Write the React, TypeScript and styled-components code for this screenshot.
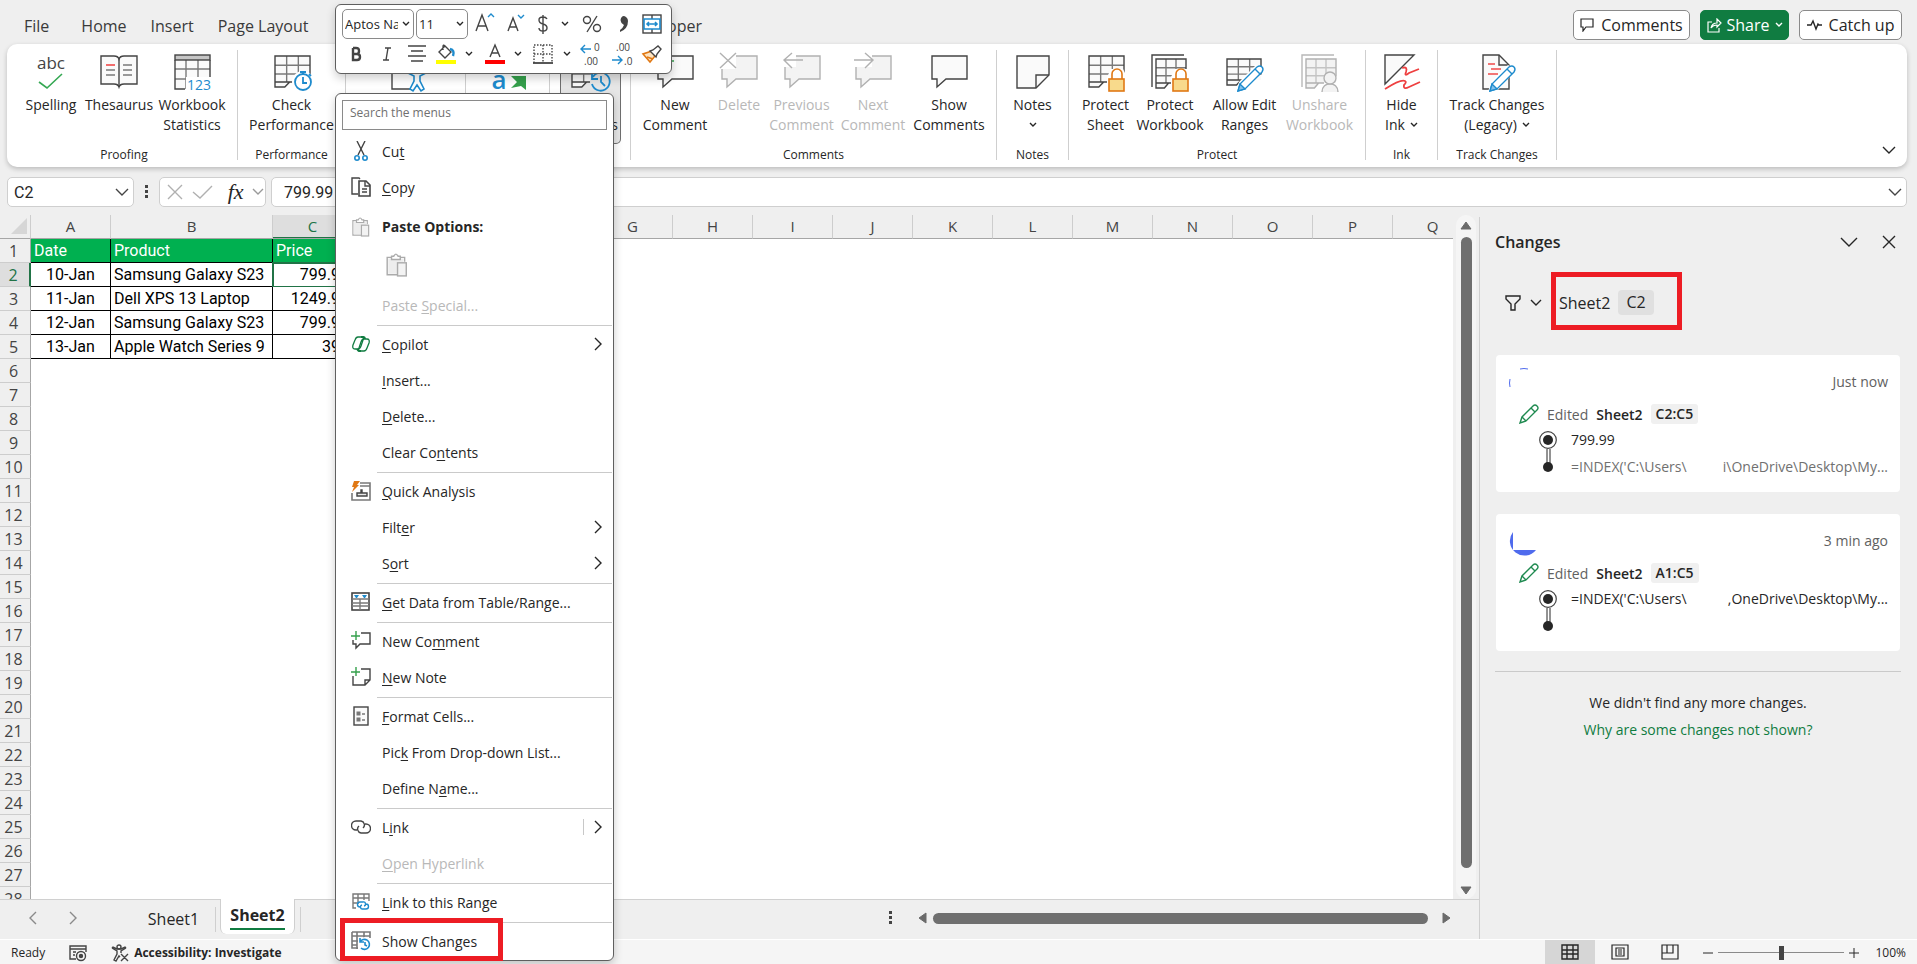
import React from "react";
import styled, { createGlobalStyle } from "styled-components";

const UI = `"Open Sans", "Noto Sans", "Liberation Sans", sans-serif`;
const CELL = `Roboto, "Liberation Sans", sans-serif`;
const INK = "#262626";
const DARK = "#444444";
const GREY = "#797979";
const BLUE = "#1e8bcd";
const GREEN = "#107c41";
const RED = "#ed1c24";
const ORANGE = "#e07814";

const Global = createGlobalStyle`
  *, *::before, *::after { box-sizing: border-box; }
  html, body, #root { height: 100%; }
  body { margin: 0; background: #efefef; color: ${INK}; font-family: ${UI}; font-size: 14px; overflow: hidden; }
  button, input, select { font: inherit; color: inherit; }
  button { background: none; border: 0; padding: 0; margin: 0; }
  svg { display: block; flex: none; }
`;

/* ---------- drawings ---------- */

const Icon = ({ w, h = w, children }: { w: number; h?: number; children: React.ReactNode }) => (
  <svg width={w} height={h} viewBox={`0 0 ${w} ${h}`} fill="none" stroke={DARK} strokeWidth="1.4" aria-hidden="true">
    {children}
  </svg>
);

const Chevron = ({ w = 8, color = INK }: { w?: number; color?: string }) => (
  <svg width={w + 2} height={w / 2 + 3} viewBox={`0 0 ${w + 2} ${w / 2 + 3}`} fill="none" stroke={color} strokeWidth="1.4" aria-hidden="true">
    <path d={`M1 1L${w / 2 + 1} ${w / 2 + 1}L${w + 1} 1`} />
  </svg>
);

const ChevronRight = ({ color = INK, dir = 1 }: { color?: string; dir?: number }) => (
  <svg width="9" height="14" viewBox="0 0 9 14" fill="none" stroke={color} strokeWidth="1.4" aria-hidden="true">
    <path d={dir > 0 ? "M1 1L7 7L1 13" : "M8 1L2 7L8 13"} />
  </svg>
);

const Sheet = ({ x = 1, y = 2, w = 35, h = 31, c = DARK, l = GREY, fill = "#fafafa" }) => (
  <g strokeWidth="1.4">
    <path d={`M${x} ${y}H${x + w}V${y + h - 5}H${x + w * 0.45}L${x + w * 0.3} ${y + h}H${x}Z`} fill={fill} stroke="none" />
    <path
      d={`M${x} ${y + h * 0.3}H${x + w}M${x} ${y + h * 0.58}H${x + w}M${x + w / 3} ${y}V${y + h - 5}M${x + (w * 2) / 3} ${y}V${y + h - 5}`}
      stroke={l}
    />
    <path d={`M${x + w} ${y + h * 0.6}V${y}H${x}V${y + h}H${x + w * 0.28}L${x + w * 0.42} ${y + h - 5}H${x + w * 0.6}M${x} ${y + h - 5}H${x + w * 0.42}`} stroke={c} />
  </g>
);

const Lock = () => (
  <g>
    <path d="M20 23L24 15H36L40 23V38H20Z" fill="#fff" stroke="none" />
    <path d="M25 25V20A5 5 0 0 1 35 20V25" fill="#fff" stroke={ORANGE} strokeWidth="1.6" />
    <rect x="22" y="25" width="15" height="12" fill="#f8da8c" stroke={ORANGE} strokeWidth="1.6" />
  </g>
);

const BluePencil = () => (
  <g stroke={BLUE} strokeWidth="1.4">
    <path d="M11 38L14 28L31 11L39 16L20 37Z" fill="#fff" stroke="none" />
    <path d="M13 37L15 30L32 13Q35 11 37 13Q39 15 37 18L20 35Z" fill="#fff" />
    <path d="M13 37L15 30L20 35Z" fill="#83c1ec" />
    <path d="M30 15L35 20" />
  </g>
);

const Bubble = ({ off = false }: { off?: boolean }) => (
  <path d="M2 2H37V25H16L7 33V25H2Z" fill={off ? "#f3f3f3" : "#fafafa"} stroke={off ? "#b1b1b1" : DARK} />
);

const icons: Record<string, React.ReactNode> = {
  spelling: (
    <Icon w={38}>
      <text x="19" y="15" textAnchor="middle" fontFamily={UI} fontSize="17" fill={DARK} stroke="none">abc</text>
      <path d="M7 28L15 34L30 20" stroke="#35a853" strokeWidth="1.6" />
    </Icon>
  ),
  thesaurus: (
    <Icon w={38}>
      <path d="M1 2H14Q18 2 19 5Q20 2 24 2H37V30H24Q20 30 19 33Q18 30 14 30H1Z" fill="#fafafa" />
      <path d="M19 5V33" />
      <path d="M6 16H15M6 21H15M23 11H32M23 16H32M23 21H32" stroke={GREY} />
      <path d="M6 11H15" stroke="#f04a4a" strokeWidth="1.6" />
    </Icon>
  ),
  stats: (
    <Icon w={38}>
      <path d="M2 1H37V35H2Z" fill="#fafafa" stroke="none" />
      <path d="M2 15H37M2 25H37M13 6V35M25 6V35" stroke={GREY} />
      <rect x="2" y="1" width="35" height="5" fill="#c6c6c6" />
      <path d="M37 6V23M2 6V35H12" />
      <path d="M13 23H38V38H13Z" fill="#fff" stroke="none" />
      <text x="26" y="36" textAnchor="middle" fontFamily={UI} fontSize="14" fill={BLUE} stroke="none">123</text>
    </Icon>
  ),
  perf: (
    <Icon w={38}>
      <Sheet x={2} />
      <circle cx="30" cy="28" r="11" fill="#fff" stroke="none" />
      <circle cx="30" cy="28" r="8" fill="#fff" stroke={BLUE} strokeWidth="1.8" />
      <path d="M27 18H33M30 18V20M36 20L38 22M30 23V29H34" stroke={BLUE} strokeWidth="1.8" />
    </Icon>
  ),
  access: (
    <Icon w={38}>
      <path d="M2 2V35H20" />
      <circle cx="27" cy="14" r="4" stroke={BLUE} />
      <path d="M18 19L24 22V27L20 35L23 37L27 31L31 37L34 35L30 27V22L36 19L34 16L30 19H24L20 16Z" fill="#fff" stroke={BLUE} strokeWidth="1.6" />
    </Icon>
  ),
  translate: (
    <Icon w={38}>
      <text x="10" y="35" textAnchor="middle" fontFamily={UI} fontWeight="600" fontSize="26" fill={BLUE} stroke="none">a</text>
      <path d="M22 22H37V36L32 32L22 34L28 28Z" fill="#35a04c" stroke="none" />
    </Icon>
  ),
  changes: (
    <Icon w={38}>
      <Sheet x={1} />
      <circle cx="30" cy="28" r="11" fill="#e6e6e6" stroke="none" />
      <path d="M22 23A9 9 0 1 1 21 30M21 20V25H27M30 22V28L34 32" stroke={BLUE} strokeWidth="1.8" />
    </Icon>
  ),
  newComment: (
    <Icon w={38}>
      <Bubble />
      <path d="M9 1V13M3 7H18" stroke="#35a04c" strokeWidth="1.6" />
    </Icon>
  ),
  del: (
    <Icon w={38}>
      <Bubble off />
      <path d="M0 -2H16V15H0Z" fill="#fff" stroke="none" />
      <path d="M0 -1L16 14M16 -1L0 14" stroke="#b1b1b1" />
    </Icon>
  ),
  prev: (
    <Icon w={38}>
      <Bubble off />
      <path d="M0 0H13V13H0Z" fill="#fff" stroke="none" />
      <path d="M20 6H1M9 -1L1 6L9 14" stroke="#b1b1b1" />
    </Icon>
  ),
  next: (
    <Icon w={38}>
      <Bubble off />
      <path d="M0 0H18V13H0Z" fill="#fff" stroke="none" />
      <path d="M0 6H19M11 -1L19 6L11 14" stroke="#b1b1b1" />
    </Icon>
  ),
  show: <Icon w={38}><Bubble /></Icon>,
  notes: (
    <Icon w={38}>
      <path d="M3 2H35V21L22 34H3Z" fill="#fafafa" />
      <path d="M22 34V21H35" />
    </Icon>
  ),
  protectSheet: <Icon w={38}><Sheet x={2} /><Lock /></Icon>,
  protectBook: (
    <Icon w={38}>
      <path d="M1 33V1H33" />
      <Sheet x={5} y={5} w={30} h={29} />
      <Lock />
    </Icon>
  ),
  allow: (
    <Icon w={40} h={38}>
      <Sheet x={2} y={5} w={34} h={26} />
      <BluePencil />
    </Icon>
  ),
  unshare: (
    <Icon w={38}>
      <path d="M1 33V1H33" stroke="#b8b8b8" />
      <Sheet x={5} y={5} w={30} h={29} c="#b1b1b1" l="#c4c4c4" fill="#f3f3f3" />
      <path d="M21 38C21 27 37 27 37 38" fill="#f3f3f3" stroke="#b1b1b1" />
      <circle cx="29" cy="24" r="6" fill="#f3f3f3" stroke="#b1b1b1" />
    </Icon>
  ),
  ink: (
    <Icon w={38}>
      <path d="M2 1H31L2 30Z" fill="#fafafa" />
      <path d="M19 14Q25 12 23 18Q21 23 26 19L36 15M2 35Q18 25 22 27Q24 28 21 31Q20 36 26 33L37 28" stroke="#ee4040" strokeWidth="1.8" />
    </Icon>
  ),
  track: (
    <Icon w={40} h={38}>
      <path d="M6 1H22L32 11V35H6Z" fill="#fafafa" />
      <path d="M22 1V11H32" />
      <path d="M11 10H18M14 15H24M11 20H21" stroke="#f04a4a" />
      <BluePencil />
    </Icon>
  ),
};

const Clipboard = ({ s = 20 }: { s?: number }) => (
  <svg width={s} height={s + 2} viewBox="0 0 20 22" fill="none" stroke="#ababab" strokeWidth="1.3" aria-hidden="true">
    <path d="M6 4H1V20H10M12 4H17V8" fill="none" />
    <path d="M2 5H16V9H10V19H2Z" fill="#ededed" stroke="none" />
    <path d="M5 6V3H7Q9 -1 11 3H13V6Z" fill="#fff" />
    <rect x="10.5" y="9" width="8" height="12" fill="#f3f3f3" />
  </svg>
);

const menuIcons: Record<string, React.ReactNode> = {
  cut: (
    <Icon w={20}>
      <path d="M6 0L13 14M14 0L7 14" />
      <circle cx="6" cy="17" r="2.2" stroke={BLUE} strokeWidth="1.6" />
      <circle cx="14" cy="17" r="2.2" stroke={BLUE} strokeWidth="1.6" />
    </Icon>
  ),
  copy: (
    <Icon w={20}>
      <path d="M7 17H1V1H8L9 2" />
      <path d="M8 4H15L19 8V19H8Z" fill="#fafafa" strokeWidth="1.6" />
      <path d="M14 4V9H19M11 12H16M11 15H16" />
    </Icon>
  ),
  paste: <Clipboard s={18} />,
  copilot: (
    <Icon w={18}>
      <g stroke={GREEN} strokeWidth="1.3">
        <path d="M6 2H11Q12 2 11 5L9 11Q8 14 6 14H3Q0 14 1 10L3 5Q4 2 6 2Z" />
        <path d="M12 4H15Q18 4 17 8L15 13Q14 16 12 16H7Q6 16 7 13L9 7Q10 4 12 4Z" />
        <path d="M9 2H11Q13 2 13 4M9 16H7Q6 16 5 14" strokeWidth="1.8" />
      </g>
    </Icon>
  ),
  quick: (
    <Icon w={20}>
      <path d="M9 2H19V19H1V12M9 5H19" stroke={GREY} strokeWidth="1.6" />
      <path d="M6 15H16V12H11V9H10V12H6Z" fill="#e8e8e8" />
      <path d="M3 0H9L6 4H8L1 11L3 6H1Z" fill={ORANGE} stroke="none" />
    </Icon>
  ),
  table: (
    <Icon w={20}>
      <rect x="1" y="1" width="17" height="17" strokeWidth="1.6" />
      <path d="M1 7H18M1 11H18M1 14H18M9 7V18" stroke={GREY} />
      <path d="M3 3H8L6 6H5ZM11 3H16L14 6H13Z" fill={BLUE} stroke="none" />
    </Icon>
  ),
  comment: (
    <Icon w={20}>
      <path d="M10 2H19V13H9L5 17V13H2V9" />
      <path d="M5 0V9M0 5H9" stroke="#35a04c" />
    </Icon>
  ),
  note: (
    <Icon w={20}>
      <path d="M10 2H19V13L14 18H2V9M14 18V13H19" />
      <path d="M5 0V9M0 5H9" stroke="#35a04c" />
    </Icon>
  ),
  format: (
    <Icon w={20}>
      <rect x="3" y="1" width="14" height="18" fill="#fafafa" />
      <rect x="6" y="6" width="3" height="3" fill={GREY} stroke={GREY} strokeWidth="1" />
      <rect x="6" y="12" width="3" height="3" fill={GREY} stroke={GREY} strokeWidth="1" />
      <path d="M11 8H14M11 14H14" stroke={GREY} />
    </Icon>
  ),
  link: (
    <Icon w={20} h={14}>
      <path d="M6 10H5A4 4 0 0 1 5 1H10A4 4 0 0 1 12 8M14 4H15A4 4 0 0 1 15 13H10A4 4 0 0 1 8 6" />
    </Icon>
  ),
  linkRange: (
    <Icon w={18}>
      <path d="M4 15H1V1H17V8M1 5H17M1 10H7M6 1V9M12 1V7" stroke={GREY} />
      <path d="M9 14H8A2 2 0 0 1 8 9H11A2 2 0 0 1 12 13M13 11H14A2 2 0 0 1 14 16H11A2 2 0 0 1 10 12" stroke={BLUE} />
    </Icon>
  ),
  changes: (
    <Icon w={20}>
      <path d="M1 1H19V7M1 5H19M6 1V18M13 1V7M1 10H7M1 14H6M1 1V17H7" stroke={GREY} strokeWidth="1.6" />
      <circle cx="14" cy="13" r="7" fill="#fff" stroke="none" />
      <path d="M9 11A5 5 0 1 1 10 17M9 7V11H13M14 11V14L16 15" stroke={BLUE} strokeWidth="1.6" />
    </Icon>
  ),
};

/* ---------- frame ---------- */

const Page = styled.div`
  height: 100vh;
  display: flex;
  flex-direction: column;
`;

const TitleRow = styled.header`
  height: 44px;
  flex: none;
  display: flex;
  align-items: center;
  justify-content: space-between;
  padding: 7px 15px 0 12px;
`;

const Tabs = styled.nav`
  display: flex;
  align-items: center;
`;

const Tab = styled.button<{ $gap?: number }>`
  padding: 0 12px;
  margin-left: ${(p) => p.$gap ?? 0}px;
  font-size: 16px;
  line-height: 24px;
  color: #3a3a3a;
`;

const TitleActions = styled.div`
  display: flex;
  gap: 10px;
`;

const ActionButton = styled.button<{ $w: number; $primary?: boolean }>`
  width: ${(p) => p.$w}px;
  height: 30px;
  margin-bottom: 1px;
  display: flex;
  align-items: center;
  justify-content: center;
  gap: ${(p) => (p.$primary ? 5 : 7)}px;
  border-radius: 5px;
  font-size: 16px;
  white-space: nowrap;
  border: 1px solid ${(p) => (p.$primary ? GREEN : "#8a8a8a")};
  background: ${(p) => (p.$primary ? GREEN : "#fff")};
  color: ${(p) => (p.$primary ? "#fff" : INK)};
`;

const Ribbon = styled.div`
  height: 123px;
  flex: none;
  margin: 0 10px 0 7px;
  display: flex;
  background: #fff;
  border-radius: 10px;
  box-shadow: 0 2px 5px rgba(0, 0, 0, 0.22);
`;

const Group = styled.section<{ $w: number; $inset?: number }>`
  width: ${(p) => p.$w}px;
  padding-left: ${(p) => p.$inset ?? 0}px;
  margin: 6px 0 7px;
  flex: none;
  border-right: 1px solid #cfcfcf;
  display: flex;
  flex-direction: column;
  justify-content: space-between;
  align-items: center;
`;

const GroupButtons = styled.div`
  display: flex;
`;

const GroupLabel = styled.div`
  font-size: 12px;
  line-height: 10px;
  min-height: 10px;
`;

const BigButton = styled.button<{ $w: number; $on?: boolean }>`
  width: ${(p) => p.$w}px;
  height: ${(p) => (p.$on ? 94 : 88)}px;
  padding-top: 4px;
  display: flex;
  flex-direction: column;
  align-items: center;
  line-height: 20px;
  font-size: 14px;
  white-space: nowrap;
  border-radius: 5px;
  background: ${(p) => (p.$on ? "#e6e6e6" : "none")};
  box-shadow: ${(p) => (p.$on ? "inset 0 0 0 1px #6f6f6f" : "none")};
  &:disabled { color: #b8b8b8; }
  & > svg { margin-bottom: 3px; overflow: visible; }
`;

const LabelLine = styled.span`
  display: flex;
  align-items: center;
  gap: 5px;
  min-height: 20px;
`;

const RibbonEnd = styled.div`
  flex: 1;
  display: flex;
  justify-content: flex-end;
  align-items: flex-end;
  padding: 0 11px 12px;
`;

const FormulaRow = styled.div`
  height: 30px;
  flex: none;
  margin: 10px 10px 8px 7px;
  display: flex;
  align-items: stretch;
  & > :last-child { margin-left: 5px; }
`;

const Box = styled.div<{ $w?: number }>`
  ${(p) => (p.$w ? `width: ${p.$w}px; flex: none;` : "flex: 1;")}
  display: flex;
  align-items: center;
  justify-content: space-between;
  padding: 0 4px 0 6px;
  background: #fff;
  border: 1px solid #cfcfcf;
  border-radius: 5px;
`;

const FxBox = styled(Box)`
  padding: 0 1px 0 6px;
`;

const BareInput = styled.input`
  border: 0;
  outline: 0;
  background: none;
  width: 60px;
  flex: 1;
  min-width: 0;
  padding: 0;
  font-family: ${CELL};
  font-size: 16px;
`;

const FormulaInput = styled(BareInput)`
  padding-left: 6px;
`;

const Dots = styled.span`
  width: 25px;
  display: grid;
  place-items: center;
`;

const Fx = styled.em`
  padding-left: 6px;
  font-family: "Liberation Serif", serif;
  font-size: 22px;
  line-height: 24px;
  color: ${INK};
`;

const Work = styled.main`
  flex: 1;
  min-height: 0;
  display: flex;
`;

const BookArea = styled.div`
  flex: 1;
  min-width: 0;
  display: flex;
  flex-direction: column;
`;

const GridRow = styled.div`
  flex: 1;
  min-height: 0;
  display: flex;
`;

const GridClip = styled.div`
  flex: 1;
  min-width: 0;
  overflow: hidden;
  background: linear-gradient(#efefef 23px, #a6a6a6 23px, #a6a6a6 24px, #fff 24px);
`;

/* ---------- worksheet ---------- */

const Table = styled.table`
  border-collapse: separate;
  border-spacing: 0;
  table-layout: fixed;
  width: 1473px;
  height: 696px;
`;

const ColHead = styled.th<{ $on?: boolean }>`
  height: 24px;
  padding: 0 0 2px;
  font-size: 15px;
  line-height: 20px;
  font-weight: 400;
  color: ${(p) => (p.$on ? "#217346" : DARK)};
  background: ${(p) => (p.$on ? "#dedede" : "#efefef")};
  border-right: 1px solid #cdcdcd;
  border-bottom: 1px solid #a6a6a6;
  box-shadow: ${(p) => (p.$on ? "inset 0 -1px 0 #217346" : "none")};
  & > svg { margin-left: auto; margin-right: 3px; }
`;

const RowHead = styled.th<{ $on?: boolean }>`
  height: 24px;
  padding: 0 3px 0 0;
  font-size: 16px;
  line-height: 22px;
  font-weight: 400;
  color: ${(p) => (p.$on ? "#217346" : DARK)};
  background: ${(p) => (p.$on ? "#dedede" : "#efefef")};
  border-right: ${(p) => (p.$on ? "2px solid #217346" : "1px solid #a6a6a6")};
  border-bottom: 1px solid #cdcdcd;
`;

const Cell = styled.td<{ $head?: boolean; $align?: string; $on?: boolean }>`
  position: relative;
  padding: 0 3px;
  font-family: ${CELL};
  font-size: 16px;
  line-height: 22px;
  white-space: nowrap;
  text-align: ${(p) => p.$align ?? "left"};
  color: ${(p) => (p.$head ? "#fff" : "#000")};
  background: ${(p) => (p.$head ? "#00b050" : "#fff")};
  border-right: 1px solid #000;
  border-bottom: 1px solid #000;
  ${(p) =>
    p.$on &&
    `&::after { content: ""; position: absolute; inset: -1px -2px -2px -1px; border: 2px solid #217346; }`}
`;

const VScroll = styled.div`
  width: 20px;
  margin: 0 3px;
  flex: none;
  display: flex;
  flex-direction: column;
  align-items: center;
  justify-content: space-between;
  padding: 6px 0 4px;
  background: #f5f5f5;
  border-radius: 10px;
`;

const Thumb = styled.div`
  width: 11px;
  flex: 1;
  margin: 6px 0 17px;
  border-radius: 6px;
  background: #6f6f6f;
`;

const SheetBar = styled.div`
  height: 40px;
  flex: none;
  display: flex;
  align-items: stretch;
  border-top: 1px solid #d0d0d0;
  padding-left: 28px;
`;

const SheetNav = styled.div`
  width: 104px;
  padding-bottom: 3px;
  display: flex;
  gap: 32px;
  align-items: center;
`;

const SheetTab = styled.button<{ $on?: boolean }>`
  width: ${(p) => (p.$on ? 75 : 84)}px;
  height: ${(p) => (p.$on ? 35 : 25)}px;
  margin: ${(p) => (p.$on ? "-1px 5px 0 4px" : "7px 0 0")};
  padding-bottom: ${(p) => (p.$on ? 1 : 0)}px;
  font-size: 16px;
  line-height: 25px;
  font-weight: ${(p) => (p.$on ? 700 : 400)};
  background: ${(p) => (p.$on ? "#fff" : "none")};
  border-radius: ${(p) => (p.$on ? "0 0 6px 6px" : "0")};
  border-right: 1px solid #cfcfcf;
  border-left: ${(p) => (p.$on ? "1px solid #cfcfcf" : "0")};
  span {
    display: inline-block;
    border-bottom: 2px solid ${GREEN};
  }
`;

const TabDivider = styled.span`
  width: 1px;
  height: 25px;
  margin-top: 7px;
  background: #cfcfcf;
`;

const HScroll = styled.div`
  margin-left: auto;
  display: flex;
  align-items: center;
  padding: 0 28px 3px 0;
`;

const HThumb = styled.div`
  width: 495px;
  height: 11px;
  margin: 0 13px 0 5px;
  border-radius: 6px;
  background: #6f6f6f;
`;

/* ---------- changes pane ---------- */

const Pane = styled.aside`
  width: 438px;
  flex: none;
  margin-top: 2px;
  padding: 11px 16px 0 15px;
  border-left: 1px solid #cfcfcf;
`;

const PaneHead = styled.div`
  height: 28px;
  display: flex;
  align-items: center;
  padding-right: 5px;
`;

const PaneTitle = styled.h2`
  margin: 0;
  flex: 1;
  font-size: 16px;
  line-height: 24px;
  font-weight: 600;
`;

const PaneButton = styled.button`
  display: grid;
  place-items: center;
  height: 24px;
  margin-left: 24px;
`;

const FilterRow = styled.div`
  height: 58px;
  margin: 16px 0 25px;
  padding-left: 10px;
  display: flex;
  align-items: center;
`;

const FilterButton = styled.button`
  width: 46px;
  padding-top: 3px;
  display: flex;
  align-items: center;
  gap: 9px;
`;

const Callout = styled.div`
  width: 131px;
  height: 58px;
  border: 5px solid ${RED};
  padding: 3px 0 0 3px;
  display: flex;
  align-items: center;
  gap: 8px;
  font-size: 16px;
`;

const ScopeBadge = styled.span`
  padding: 0 8px;
  line-height: 25px;
  border-radius: 4px;
  background: #e0e0e0;
`;

const Card = styled.article`
  height: 137px;
  margin: 0 1px 22px;
  padding: 12px 12px 0 13px;
  border-radius: 4px;
  background: #fff;
`;

const CardTop = styled.div`
  height: 32px;
  display: flex;
  justify-content: space-between;
  align-items: center;
  color: #616161;
  time { padding-bottom: 4px; }
`;

const Edited = styled.div`
  height: 30px;
  padding-left: 10px;
  display: flex;
  align-items: center;
  gap: 8px;
  color: #616161;
  b { font-weight: 600; color: ${INK}; }
`;

const RangeBadge = styled.span`
  padding: 0 5px;
  line-height: 20px;
  border-radius: 3px;
  background: #f0f0f0;
  font-weight: 600;
  color: ${INK};
`;

const History = styled.div`
  display: flex;
  gap: 14px;
  padding: 1px 0 0 30px;
`;

const Values = styled.div`
  flex: 1;
  display: flex;
  flex-direction: column;
  gap: 7px;
`;

const Value = styled.div<{ $old?: boolean }>`
  display: flex;
  justify-content: space-between;
  line-height: 20px;
  color: ${(p) => (p.$old ? "#707070" : INK)};
  white-space: nowrap;
`;

const PaneFoot = styled.footer`
  margin-top: -2px;
  padding-top: 17px;
  border-top: 1px solid #cacaca;
  text-align: center;
  line-height: 27px;
  p { margin: 0; }
  a { color: ${GREEN}; text-decoration: none; }
`;

/* ---------- status bar ---------- */

const Status = styled.footer`
  height: 25px;
  flex: none;
  display: flex;
  align-items: center;
  padding: 1px 11px 0;
  background: #f5f5f5;
  border-top: 1px solid #fff;
  font-size: 12px;
`;

const StatusButton = styled.button`
  display: flex;
  align-items: center;
  gap: 5px;
  margin-left: 23px;
  font-weight: 700;
`;

const ViewButtons = styled.div`
  margin: -1px 8px 0 auto;
  display: flex;
`;

const ViewButton = styled.button<{ $on?: boolean }>`
  width: 50px;
  height: 24px;
  display: grid;
  place-items: center;
  background: ${(p) => (p.$on ? "#d6d6d6" : "none")};
`;

const Zoom = styled.div`
  display: flex;
  align-items: center;
  gap: 5px;
`;

const Slider = styled.input`
  appearance: none;
  width: 126px;
  height: 14px;
  margin: 0;
  background: linear-gradient(#8a8a8a, #8a8a8a) center / 100% 1px no-repeat;
  &::-webkit-slider-thumb {
    appearance: none;
    width: 5px;
    height: 14px;
    background: ${DARK};
  }
`;

const ZoomText = styled.output`
  margin-left: 11px;
`;

/* ---------- floating mini toolbar ---------- */

const Floating = styled.div`
  position: absolute;
  background: #fff;
  border: 1px solid #5f5f5f;
  border-radius: 6px;
  box-shadow: 0 4px 10px rgba(0, 0, 0, 0.2);
`;

const MiniBar = styled(Floating)`
  left: 335px;
  top: 4px;
  width: 337px;
  height: 70px;
  padding: 4px 2px 4px 6px;
`;

const MiniRow = styled.div`
  height: 30px;
  display: flex;
  align-items: center;
`;

const SelectWrap = styled.span<{ $w: number }>`
  width: ${(p) => p.$w}px;
  height: 30px;
  margin-right: 2px;
  display: flex;
  align-items: center;
  gap: 4px;
  flex: none;
  border: 1px solid #8a8a8a;
  border-radius: 5px;
  & > svg { margin-right: 3px; }
`;

const Select = styled.select`
  appearance: none;
  border: 0;
  outline: 0;
  background: none;
  flex: 1;
  min-width: 0;
  width: 20px;
  height: 26px;
  padding: 0 0 0 2px;
  font-size: 13px;
`;

const MiniButton = styled.button<{ $w?: number }>`
  width: ${(p) => p.$w ?? 30}px;
  height: 30px;
  flex: none;
  display: grid;
  place-items: center;
  color: ${DARK};
  & > svg { overflow: visible; }
`;

/* ---------- context menu ---------- */

const Menu = styled(Floating)`
  left: 335px;
  top: 93px;
  width: 279px;
  padding-top: 6px;
`;

const Search = styled.input`
  display: block;
  width: 265px;
  height: 30px;
  margin: 0 6px 4px;
  padding: 0 7px 5px;
  border: 1px solid #8a8a8a;
  outline: 0;
  font-size: 12px;
  &::placeholder { color: #707070; opacity: 1; }
`;

const Item = styled.button<{ $tall?: boolean }>`
  position: relative;
  width: 100%;
  height: ${(p) => (p.$tall ? 41 : 36)}px;
  padding: 0 10px ${(p) => (p.$tall ? 0 : 2)}px 0;
  display: flex;
  align-items: center;
  text-align: left;
  font-weight: ${(p) => (p.$tall ? 700 : 400)};
  &:disabled { color: #b8b8b8; }
  u { text-underline-offset: 2px; }
`;

const ItemIcon = styled.span`
  width: 46px;
  padding-left: 3px;
  display: grid;
  place-items: center;
`;

const ItemText = styled.span`
  flex: 1;
`;

const Split = styled.span`
  width: 1px;
  height: 16px;
  margin-right: 10px;
  background: #c8c8c8;
`;

const Rule = styled.hr`
  height: 1px;
  margin: 1px 1px 1px 41px;
  border: 0;
  background: #cacaca;
`;

const PasteRow = styled.div`
  height: 41px;
  padding: 6px 0 0 50px;
`;

const Highlight = styled.span`
  position: absolute;
  left: 4px;
  top: -6px;
  width: 163px;
  height: 43px;
  border: 5px solid ${RED};
`;

/* ---------- data ---------- */

type Big = { id: string; icon: string; w: number; lines: string[]; off?: boolean; on?: boolean; drop?: boolean };
const groups: { label: string; w: number; name: string; inset?: number; buttons: Big[] }[] = [
  {
    label: "Proofing", name: "Proofing", w: 231, inset: 4,
    buttons: [
      { id: "Spelling", icon: "spelling", w: 66, lines: ["Spelling"] },
      { id: "Thesaurus", icon: "thesaurus", w: 70, lines: ["Thesaurus"] },
      { id: "Statistics", icon: "stats", w: 76, lines: ["Workbook", "Statistics"] },
    ],
  },
  { label: "Performance", name: "Performance", w: 108, buttons: [{ id: "Check Performance", icon: "perf", w: 90, lines: ["Check", "Performance"] }] },
  { label: "", name: "Accessibility", w: 120, inset: 6, buttons: [{ id: "Check Accessibility", icon: "access", w: 90, lines: [] }] },
  { label: "", name: "Language", w: 84, buttons: [{ id: "Translate", icon: "translate", w: 70, lines: [] }] },
  { label: "Changes", name: "Changes", w: 81, buttons: [{ id: "Show Changes", icon: "changes", w: 61, on: true, lines: ["Show", "Changes"] }] },
  {
    label: "Comments", name: "Comments", w: 366,
    buttons: [
      { id: "New Comment", icon: "newComment", w: 72, lines: ["New", "Comment"] },
      { id: "Delete", icon: "del", w: 56, lines: ["Delete"], off: true },
      { id: "Previous Comment", icon: "prev", w: 69, lines: ["Previous", "Comment"], off: true },
      { id: "Next Comment", icon: "next", w: 74, lines: ["Next", "Comment"], off: true },
      { id: "Show Comments", icon: "show", w: 78, lines: ["Show", "Comments"] },
    ],
  },
  { label: "Notes", name: "Notes", w: 72, buttons: [{ id: "Notes", icon: "notes", w: 60, lines: ["Notes", ""], drop: true }] },
  {
    label: "Protect", name: "Protect", w: 297,
    buttons: [
      { id: "Protect Sheet", icon: "protectSheet", w: 56, lines: ["Protect", "Sheet"] },
      { id: "Protect Workbook", icon: "protectBook", w: 73, lines: ["Protect", "Workbook"] },
      { id: "Allow Edit Ranges", icon: "allow", w: 76, lines: ["Allow Edit", "Ranges"] },
      { id: "Unshare Workbook", icon: "unshare", w: 74, lines: ["Unshare", "Workbook"], off: true },
    ],
  },
  { label: "Ink", name: "Ink", w: 72, buttons: [{ id: "Hide Ink", icon: "ink", w: 60, lines: ["Hide", "Ink"], drop: true }] },
  { label: "Track Changes", name: "Track Changes", w: 119, buttons: [{ id: "Track Changes", icon: "track", w: 104, lines: ["Track Changes", "(Legacy)"], drop: true }] },
];

const columns = "ABCDEFGHIJKLMNOPQ".split("");
const hiddenUnderMenu = ["D", "E", "F"];
const rows: string[][] = [
  ["Date", "Product", "Price"],
  ["10-Jan", "Samsung Galaxy S23", "799.99"],
  ["11-Jan", "Dell XPS 13 Laptop", "1249.99"],
  ["12-Jan", "Samsung Galaxy S23", "799.99"],
  ["13-Jan", "Apple Watch Series 9", "399"],
];
const aligns = ["center", "left", "right"];

type Entry = { text: string; icon?: string; off?: boolean; sub?: boolean; split?: boolean; marked?: boolean };
const sections: Entry[][] = [
  [{ text: "&Copilot", icon: "copilot", sub: true }, { text: "&Insert..." }, { text: "&Delete..." }, { text: "Clear Co&ntents" }],
  [{ text: "&Quick Analysis", icon: "quick" }, { text: "Filt&er", sub: true }, { text: "S&ort", sub: true }],
  [{ text: "&Get Data from Table/Range...", icon: "table" }],
  [{ text: "New Co&mment", icon: "comment" }, { text: "&New Note", icon: "note" }],
  [{ text: "&Format Cells...", icon: "format" }, { text: "Pic&k From Drop-down List..." }, { text: "Define N&ame..." }],
  [{ text: "L&ink", icon: "link", sub: true, split: true }, { text: "&Open Hyperlink", off: true }],
  [{ text: "&Link to this Range", icon: "linkRange" }],
  [{ text: "Show Chan&ges", icon: "changes", marked: true }],
];

const AccessKey = ({ text }: { text: string }) => {
  const i = text.indexOf("&");
  if (i < 0) return <>{text}</>;
  return (
    <>
      {text.slice(0, i)}
      <u>{text[i + 1]}</u>
      {text.slice(i + 2)}
    </>
  );
};

const MenuItem = ({ e }: { e: Entry }) => (
  <Item role="menuitem" disabled={e.off}>
    <ItemIcon>{e.icon && menuIcons[e.icon]}</ItemIcon>
    <ItemText><AccessKey text={e.text} /></ItemText>
    {e.split && <Split />}
    {e.sub && <ChevronRight />}
    {e.marked && <Highlight />}
  </Item>
);

const DotsIcon = () => (
  <svg width="4" height="14" fill={DARK} aria-hidden="true">
    <rect x="0" y="0" width="3" height="3" /><rect x="0" y="5" width="3" height="3" /><rect x="0" y="10" width="3" height="3" />
  </svg>
);

const Arrow = ({ d, w = 12, h = 10 }: { d: string; w?: number; h?: number }) => (
  <svg width={w} height={h} fill="#6a6a6a" stroke="#6a6a6a" strokeLinejoin="round" aria-hidden="true"><path d={d} /></svg>
);

const Timeline = () => (
  <svg width="18" height="46" viewBox="0 0 18 46" fill="none" aria-hidden="true">
    <circle cx="9" cy="10" r="8.3" stroke={DARK} strokeWidth="1.2" />
    <circle cx="9" cy="10" r="5" fill={INK} />
    <path d="M8 19V34M11 19V34" stroke={INK} />
    <circle cx="9" cy="37" r="5" fill={INK} />
  </svg>
);

const GreenPencil = () => (
  <Icon w={20}>
    <g stroke="#1f8a50">
      <path d="M1 19L3 13L14 2Q16 0 18 2Q20 4 18 6L7 17Z" />
      <path d="M3 13L7 17M12 4L16 8" />
    </g>
  </Icon>
);

const change = (n: number, when: string, range: string, avatar: React.ReactNode, values: React.ReactNode) => (
  <Card key={n}>
    <CardTop>
      <svg width="30" height="30" viewBox="0 0 30 30" fill="none" aria-hidden="true">{avatar}</svg>
      <time>{when}</time>
    </CardTop>
    <Edited>
      <GreenPencil />
      <span>Edited</span>
      <b>Sheet2</b>
      <RangeBadge>{range}</RangeBadge>
    </Edited>
    <History>
      <Timeline />
      <Values>{values}</Values>
    </History>
  </Card>
);

export default function App() {
  return (
    <Page>
      <Global />
      <TitleRow>
        <Tabs aria-label="Ribbon tabs">
          <Tab>File</Tab>
          <Tab $gap={8}>Home</Tab>
          <Tab>Insert</Tab>
          <Tab>Page Layout</Tab>
          <Tab $gap={293}>Developer</Tab>
        </Tabs>
        <TitleActions>
          <ActionButton $w={117}>
            <Icon w={14}><path d="M1 1H13V9H6L3 13V9H1Z" stroke={INK} strokeWidth="1.2" /></Icon>
            Comments
          </ActionButton>
          <ActionButton $w={89} $primary>
            <Icon w={15}><path d="M5 4H1V14H12V10M4 10Q5 5 10 5V1L14 5L10 9V7Q6 7 4 10Z" stroke="#fff" strokeWidth="1.2" /></Icon>
            Share <Chevron w={6} color="#fff" />
          </ActionButton>
          <ActionButton $w={103}>
            <Icon w={15}><path d="M0 7H4L6 3L9 11L11 6L12 7H15" stroke={INK} /></Icon>
            Catch up
          </ActionButton>
        </TitleActions>
      </TitleRow>

      <Ribbon>
        {groups.map((g) => (
          <Group key={g.name} $w={g.w} $inset={g.inset} aria-label={g.name}>
            <GroupButtons>
              {g.buttons.map((b) => (
                <BigButton key={b.id} $w={b.w} $on={b.on} disabled={b.off} aria-label={b.id}>
                  {icons[b.icon]}
                  {b.lines.map((t, i) => (
                    <LabelLine key={i}>
                      {t}
                      {b.drop && i === b.lines.length - 1 && <Chevron w={6} />}
                    </LabelLine>
                  ))}
                </BigButton>
              ))}
            </GroupButtons>
            <GroupLabel>{g.label}</GroupLabel>
          </Group>
        ))}
        <RibbonEnd>
          <button aria-label="Ribbon display options"><Chevron w={12} /></button>
        </RibbonEnd>
      </Ribbon>

      <FormulaRow>
        <Box $w={127}>
          <BareInput aria-label="Name box" defaultValue="C2" />
          <Chevron w={12} color={DARK} />
        </Box>
        <Dots><DotsIcon /></Dots>
        <FxBox $w={107}>
          <button aria-label="Cancel"><Icon w={18}><path d="M2 2L16 16M16 2L2 16" stroke="#b0b0b0" /></Icon></button>
          <button aria-label="Enter"><Icon w={21} h={16}><path d="M1 8L8 14L20 2" stroke="#b0b0b0" /></Icon></button>
          <Fx>fx</Fx>
          <Chevron w={10} color="#9a9a9a" />
        </FxBox>
        <Box>
          <FormulaInput aria-label="Formula bar" defaultValue="799.99" />
          <Chevron w={12} color={DARK} />
        </Box>
      </FormulaRow>

      <Work>
        <BookArea>
          <GridRow>
            <GridClip>
              <Table>
                <colgroup>
                  <col width={31} />
                  {columns.map((c) => <col key={c} width={c === "B" ? 162 : 80} />)}
                </colgroup>
                <thead>
                  <tr>
                    <ColHead aria-label="Select all">
                      <svg width="16" height="16" fill="#d6d6d6" aria-hidden="true"><path d="M16 0V16H0Z" /></svg>
                    </ColHead>
                    {columns.map((c) => (
                      <ColHead key={c} scope="col" $on={c === "C"}>{hiddenUnderMenu.includes(c) ? "" : c}</ColHead>
                    ))}
                  </tr>
                </thead>
                <tbody>
                  {Array.from({ length: 28 }, (_, r) => (
                    <tr key={r}>
                      <RowHead scope="row" $on={r === 1}>{r + 1}</RowHead>
                      {(rows[r] ?? []).map((v, c) => (
                        <Cell key={c} $head={r === 0} $align={r === 0 ? "left" : aligns[c]} $on={r === 1 && c === 2}>{v}</Cell>
                      ))}
                    </tr>
                  ))}
                </tbody>
              </Table>
            </GridClip>
            <VScroll aria-hidden="true">
              <Arrow d="M6 1L11 8H1Z" />
              <Thumb />
              <Arrow d="M1 2H11L6 9Z" />
            </VScroll>
          </GridRow>
          <SheetBar>
            <SheetNav>
              <button aria-label="Previous sheet"><ChevronRight dir={-1} color="#8a8a8a" /></button>
              <button aria-label="Next sheet"><ChevronRight color="#8a8a8a" /></button>
            </SheetNav>
            <SheetTab>Sheet1</SheetTab>
            <SheetTab $on><span>Sheet2</span></SheetTab>
            <TabDivider />
            <HScroll aria-hidden="true">
              <DotsIcon />
              <Dots />
              <Arrow w={10} h={12} d="M8 1V11L1 6Z" />
              <HThumb />
              <Arrow w={10} h={12} d="M2 1V11L9 6Z" />
            </HScroll>
          </SheetBar>
        </BookArea>

        <Pane aria-label="Changes">
          <PaneHead>
            <PaneTitle>Changes</PaneTitle>
            <PaneButton aria-label="Task pane options"><Chevron w={16} /></PaneButton>
            <PaneButton aria-label="Close"><Icon w={14}><path d="M1 1L13 13M13 1L1 13" stroke={INK} /></Icon></PaneButton>
          </PaneHead>
          <FilterRow>
            <FilterButton aria-label="Filter">
              <Icon w={16}><path d="M1 1H15V4L10 9V15H6V9L1 4Z" stroke={INK} /></Icon>
              <Chevron w={10} />
            </FilterButton>
            <Callout>
              Sheet2 <ScopeBadge>C2</ScopeBadge>
            </Callout>
          </FilterRow>
          {change(
            1, "Just now", "C2:C5",
            <path d="M11 1Q15 0 19 1M1 11Q0 15 1 19" stroke="#4f6bed" />,
            <>
              <Value>799.99</Value>
              <Value $old><span>=INDEX('C:\Users\</span><span>i\OneDrive\Desktop\My...</span></Value>
            </>,
          )}
          {change(
            2, "3 min ago", "A1:C5",
            <path d="M4 5A14 14 0 1 0 27 23H4Z" fill="#4f6bed" />,
            <Value><span>=INDEX('C:\Users\</span><span>,OneDrive\Desktop\My...</span></Value>,
          )}
          <PaneFoot>
            <p>We didn't find any more changes.</p>
            <a href="#why">Why are some changes not shown?</a>
          </PaneFoot>
        </Pane>
      </Work>

      <Status>
        <span>Ready</span>
        <StatusButton aria-label="Macro recording">
          <Icon w={20} h={18}>
            <path d="M8 15H2V2H18V8M2 5H18M5 8H8M5 11H7" />
            <circle cx="13" cy="12" r="4.5" /><circle cx="13" cy="12" r="1.5" fill={DARK} />
          </Icon>
        </StatusButton>
        <StatusButton>
          <Icon w={18}>
            <circle cx="8" cy="3" r="2" />
            <path d="M1 4L6 7V10L3 16L5 17L8 12L9 13M15 4L10 7V9M1 4L2 3L6 5H10L14 3L15 4M10 10L17 17M17 10L10 17" />
          </Icon>
          Accessibility: Investigate
        </StatusButton>
        <ViewButtons>
          <ViewButton $on aria-label="Normal view">
            <Icon w={18} h={16}><path d="M1 1H17V15H1ZM1 6H17M1 10H17M6 1V15M12 1V15" stroke={INK} /></Icon>
          </ViewButton>
          <ViewButton aria-label="Page layout view">
            <Icon w={18} h={16}><path d="M1 1H17V15H1ZM5 4H13V12H5ZM7 6H11M7 8H11M7 10H11" stroke={INK} strokeWidth="1.2" /></Icon>
          </ViewButton>
          <ViewButton aria-label="Page break preview">
            <Icon w={18} h={16}><path d="M1 1H17V15H1ZM6 1V9H1M6 9H12V1" stroke={INK} strokeWidth="1.2" /></Icon>
          </ViewButton>
        </ViewButtons>
        <Zoom>
          <button aria-label="Zoom out"><Icon w={10}><path d="M0 5H10" stroke={INK} strokeWidth="1" /></Icon></button>
          <Slider type="range" min={0} max={100} defaultValue={50} aria-label="Zoom" />
          <button aria-label="Zoom in"><Icon w={10}><path d="M0 5H10M5 0V10" stroke={INK} strokeWidth="1" /></Icon></button>
          <ZoomText>100%</ZoomText>
        </Zoom>
      </Status>

      <MiniBar role="toolbar" aria-label="Formatting">
        <MiniRow>
          <SelectWrap $w={72}>
            <Select aria-label="Font"><option>Aptos Narrow</option></Select>
            <Chevron w={6} />
          </SelectWrap>
          <SelectWrap $w={52}>
            <Select aria-label="Font size"><option>11</option></Select>
            <Chevron w={6} />
          </SelectWrap>
          <MiniButton aria-label="Increase font size">
            <Icon w={22}><path d="M2 18L8 2L14 18M4 13H12" /><path d="M14 4L17 1L20 4" stroke={BLUE} /></Icon>
          </MiniButton>
          <MiniButton aria-label="Decrease font size">
            <Icon w={22}><path d="M4 18L9 5L14 18M6 14H12" /><path d="M14 2L17 5L20 2" stroke={BLUE} /></Icon>
          </MiniButton>
          <MiniButton aria-label="Accounting format" $w={25}>
            <Icon w={14} h={22}><path d="M11 6Q10 4 7 4Q3 4 3 7Q3 10 7 11Q11 12 11 15Q11 18 7 18Q3 18 3 15M7 2V21" /></Icon>
          </MiniButton>
          <MiniButton aria-label="Accounting options" $w={20}><Chevron w={6} /></MiniButton>
          <MiniButton aria-label="Percent style" $w={34}>
            <Icon w={20}><circle cx="5" cy="6" r="3.5" /><circle cx="15" cy="14" r="3.5" /><path d="M15 2L5 18" /></Icon>
          </MiniButton>
          <MiniButton aria-label="Comma style" $w={27}>
            <Icon w={12} h={18}><path d="M6 1A5 5 0 0 1 11 6Q11 14 3 17V15Q6 13 7 10A5 5 0 0 1 6 1Z" fill={DARK} stroke="none" /></Icon>
          </MiniButton>
          <MiniButton aria-label="Merge and center" $w={32}>
            <Icon w={20}>
              <rect x="1" y="1" width="18" height="18" /><path d="M10 1V5M10 15V19" />
              <path d="M2 5H18V15H2ZM5 10H15M7 8L5 10L7 12M13 8L15 10L13 12" stroke={BLUE} strokeWidth="1.6" />
            </Icon>
          </MiniButton>
        </MiniRow>
        <MiniRow>
          <MiniButton aria-label="Bold">
            <Icon w={14} h={16}><path d="M3 2V14H7Q10 14 10 11Q10 8 7 8H3M7 8Q9 8 9 5Q9 2 6 2H3" strokeWidth="2.4" /></Icon>
          </MiniButton>
          <MiniButton aria-label="Italic">
            <Icon w={12} h={16}><path d="M4 2H10M2 14H8M7 2L5 14" /></Icon>
          </MiniButton>
          <MiniButton aria-label="Center">
            <Icon w={18}><path d="M0 1H18M3 6H15M0 11H18M3 16H15" /></Icon>
          </MiniButton>
          <MiniButton aria-label="Fill color" $w={28}>
            <Icon w={20}>
              <path d="M3 8L9 2L15 8L9 14ZM9 2Q7 0 7 3V6" /><path d="M14 5Q19 6 17 12" stroke={BLUE} strokeWidth="2.4" />
              <rect x="0" y="16" width="20" height="4" fill="#ffff00" stroke="none" />
            </Icon>
          </MiniButton>
          <MiniButton aria-label="Fill options" $w={18}><Chevron w={6} /></MiniButton>
          <MiniButton aria-label="Font color" $w={33}>
            <Icon w={20}>
              <path d="M5 13L10 1L15 13M7 9H13" /><rect x="0" y="16" width="20" height="4" fill="#ff0000" stroke="none" />
            </Icon>
          </MiniButton>
          <MiniButton aria-label="Font color options" $w={14}><Chevron w={6} /></MiniButton>
          <MiniButton aria-label="Borders" $w={36}>
            <Icon w={20}><path d="M1 19V1H19V19M10 1V18M1 10H19" strokeDasharray="1.5 1.5" /><path d="M0 19H20" strokeWidth="1.8" /></Icon>
          </MiniButton>
          <MiniButton aria-label="Border options" $w={12}><Chevron w={6} /></MiniButton>
          <MiniButton aria-label="Increase decimal" $w={36}>
            <Icon w={22}>
              <path d="M11 6H1M5 2L1 6L5 10" stroke={BLUE} />
              <text x="14" y="8" fontFamily={UI} fontSize="10" fill={DARK} stroke="none">0</text>
              <text x="4" y="22" fontFamily={UI} fontSize="10" fill={DARK} stroke="none">.00</text>
            </Icon>
          </MiniButton>
          <MiniButton aria-label="Decrease decimal" $w={27}>
            <Icon w={22}>
              <path d="M0 17H10M6 13L10 17L6 21" stroke={BLUE} />
              <text x="4" y="8" fontFamily={UI} fontSize="10" fill={DARK} stroke="none">.00</text>
              <text x="12" y="22" fontFamily={UI} fontSize="10" fill={DARK} stroke="none">.0</text>
            </Icon>
          </MiniButton>
          <MiniButton aria-label="Format painter" $w={32}>
            <Icon w={20}>
              <path d="M10 7L1 10L8 18L13 12Z" fill="#fde3c0" stroke={ORANGE} strokeWidth="1.6" />
              <path d="M5 13L11 15" stroke={ORANGE} />
              <path d="M8 7L14 13L15 10L19 5L16 2L11 6Z" fill="#fff" />
            </Icon>
          </MiniButton>
        </MiniRow>
      </MiniBar>

      <Menu role="menu">
        <Search aria-label="Search the menus" placeholder="Search the menus" />
        <MenuItem e={{ text: "Cu&t", icon: "cut" }} />
        <MenuItem e={{ text: "&Copy", icon: "copy" }} />
        <Item $tall role="menuitem">
          <ItemIcon>{menuIcons.paste}</ItemIcon>
          <ItemText>Paste Options:</ItemText>
        </Item>
        <PasteRow><button aria-label="Paste"><Clipboard s={22} /></button></PasteRow>
        <MenuItem e={{ text: "Paste &Special...", off: true }} />
        {sections.map((s, i) => (
          <React.Fragment key={i}>
            <Rule />
            {s.map((e) => <MenuItem key={e.text} e={e} />)}
          </React.Fragment>
        ))}
      </Menu>
    </Page>
  );
}
